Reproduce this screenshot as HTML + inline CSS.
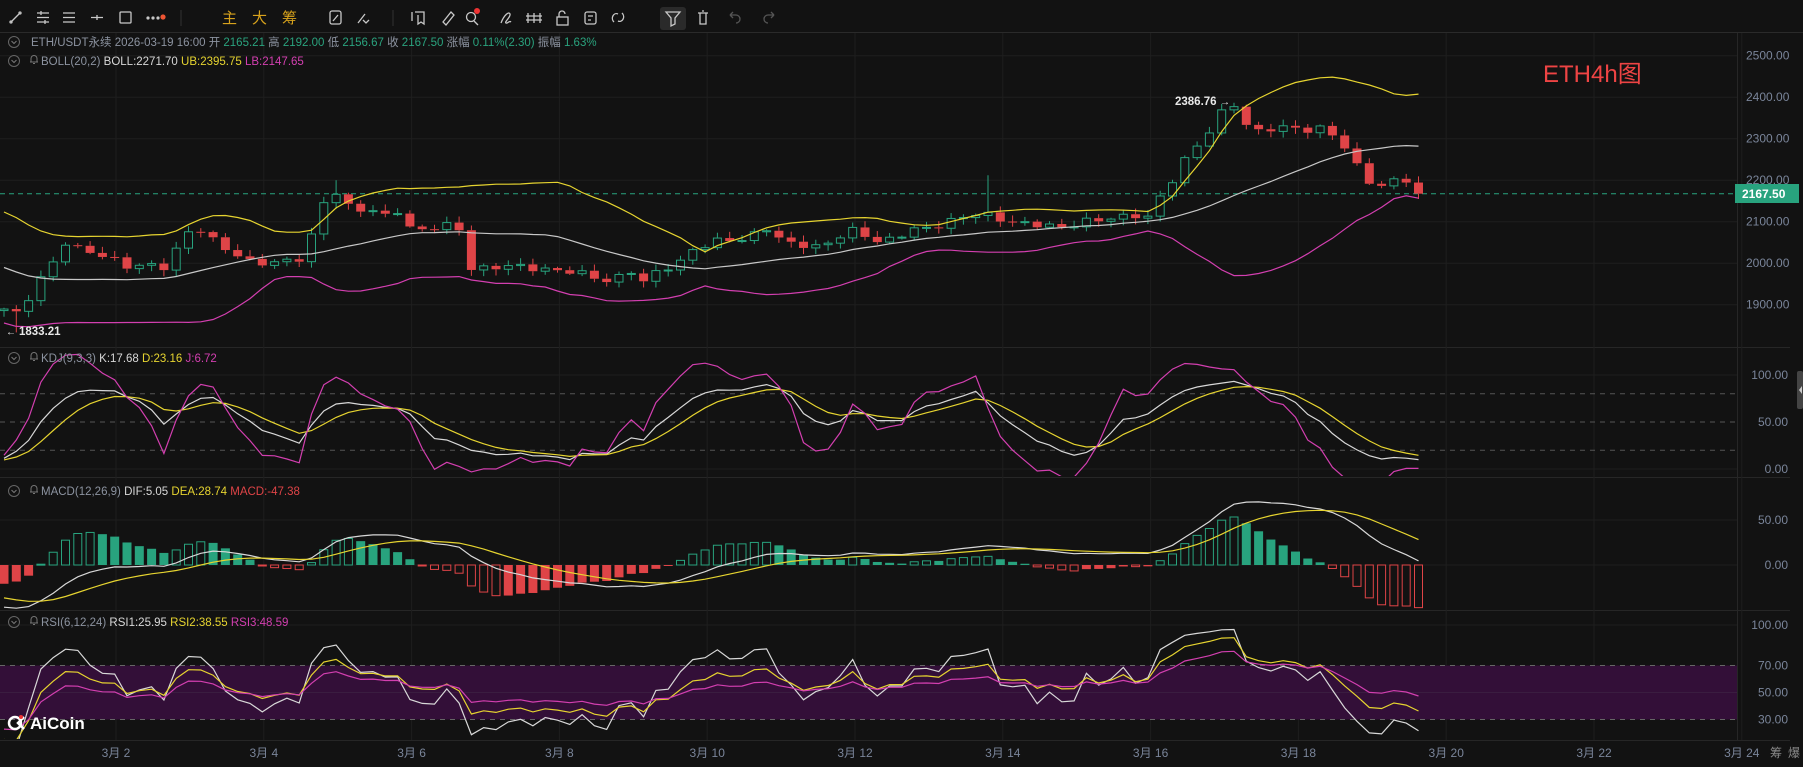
<!DOCTYPE html>
<html><head><meta charset="utf-8">
<style>
html,body{margin:0;padding:0;background:#121212;}
body{width:1803px;height:767px;overflow:hidden;position:relative;font-family:"Liberation Sans","Noto Sans CJK SC",sans-serif;}
svg{position:absolute;left:0;top:0;}
</style></head>
<body>
<svg id="c" width="1803" height="767" xmlns="http://www.w3.org/2000/svg"></svg>
<script>
const S=document.getElementById('c');
let out='';
const CR=1737;
const G='#28a37e', R='#df4447';
function line(x1,y1,x2,y2,c,w,d){out+=`<line x1="${x1}" y1="${y1}" x2="${x2}" y2="${y2}" stroke="${c}" stroke-width="${w||1}" ${d?'stroke-dasharray="'+d+'"':''}/>`;}
function txt(x,y,t,c,s,extra){out+=`<text x="${x}" y="${y}" fill="${c}" font-size="${s||12}" font-family="Liberation Sans, Noto Sans CJK SC, sans-serif" ${extra||''}>${t}</text>`;}
out+=`<rect width="1803" height="767" fill="#121212"/>`;
line(0,32.5,1803,32.5,'#2a2a2a',1);
const panes=[[33,347],[347,477],[477,610],[610,740]];
panes.forEach(p=>line(0,p[1]+.5,1790,p[1]+.5,'#262626',1));
line(CR+.5,33,CR+.5,740,'#262626',1);
const dates=['3月 2','3月 4','3月 6','3月 8','3月 10','3月 12','3月 14','3月 16','3月 18','3月 20','3月 22','3月 24'];
dates.forEach((d,i)=>{const x=116+i*147.8;line(x,33,x,740,'#1e1e1e',1);txt(x,757,d,'#7a859a',12,'text-anchor="middle"');});
txt(1770,757,'筹','#8a8a8a',12);txt(1788,757,'爆','#8a8a8a',12);
const py=p=>55.7+(2500-p)*0.415;
for(let p=1900;p<=2500;p+=100){const y=py(p);line(0,y,CR,y,'#1e1e1e',1);txt(1746,y+4,p.toFixed(2),'#7a859a',12);}
const ky=v=>469-v*0.94;
[100,0].forEach(v=>{line(0,ky(v),CR,ky(v),'#1e1e1e',1);});
[80,50,20].forEach(v=>line(0,ky(v),CR,ky(v),'#555',1,'5,5'));
[[100,'100.00'],[50,'50.00'],[0,'0.00']].forEach(a=>txt(1788,ky(a[0])+4,a[1],'#7a859a',12,'text-anchor="end"'));
const my=v=>565-v*0.9;
[50,0].forEach(v=>line(0,my(v),CR,my(v),'#1e1e1e',1));
txt(1788,my(50)+4,'50.00','#7a859a',12,'text-anchor="end"');txt(1788,my(0)+4,'0.00','#7a859a',12,'text-anchor="end"');
const ry=v=>625+(100-v)*1.35;
out+=`<rect x="0" y="${ry(70)}" width="${CR}" height="${ry(30)-ry(70)}" fill="#330f38"/>`;
line(0,ry(100),CR,ry(100),'#1e1e1e',1);line(0,ry(50),CR,ry(50),'#3a1d40',1);
[70,30].forEach(v=>line(0,ry(v),CR,ry(v),'#666',1,'5,5'));
[[100,'100.00'],[70,'70.00'],[50,'50.00'],[30,'30.00']].forEach(a=>txt(1788,ry(a[0])+4,a[1],'#7a859a',12,'text-anchor="end"'));

const K=[[0,1900],[10,1870],[20,1900],[35,1960],[45,1990],[55,2050],[65,2040],[80,2030],[95,2010],[110,1990],[130,2000],[145,1990],[160,2060],[170,2090],[185,2060],[200,2030],[215,2000],[230,2000],[250,2010],[265,2010],[280,2140],[295,2180],[305,2130],[320,2130],[335,2110],[345,2130],[355,2090],[370,2080],[385,2090],[400,2080],[410,1990],[430,1990],[450,1990],[470,1990],[490,1980],[510,1970],[530,1960],[550,1980],[560,1950],[575,1990],[590,2000],[600,2030],[615,2040],[630,2060],[650,2060],[665,2085],[680,2050],[695,2050],[710,2040],[725,2050],[740,2080],[755,2070],[765,2050],[780,2060],[795,2080],[810,2090],[825,2100],[840,2110],[855,2120],[870,2110],[880,2100],[895,2090],[910,2090],[925,2090],[940,2100],[955,2100],[970,2110],[985,2120],[1000,2110],[1010,2160],[1020,2200],[1030,2250],[1045,2300],[1055,2330],[1065,2370],[1075,2380],[1080,2340],[1095,2320],[1110,2330],[1125,2320],[1140,2320],[1150,2330],[1165,2300],[1180,2230],[1195,2180],[1210,2200],[1220,2210],[1235,2167.5]];
const Kr=K.map(a=>[(a[0]*1.15-4)/12.3,a[1]]);
function interp(i){for(let k=0;k<Kr.length-1;k++){if(i>=Kr[k][0]&&i<=Kr[k+1][0]){const t=(i-Kr[k][0])/(Kr[k+1][0]-Kr[k][0]);return Kr[k][1]+t*(Kr[k+1][1]-Kr[k][1]);}}return Kr[Kr.length-1][1];}
const N=116, W=45;
let C=[],O=[],H=[],L=[];
for(let j=0;j<W;j++){let c; if(j<25) c=2080+Math.sin(j*0.6)*30; else {const t=(j-25)/20; c=2110-230*t;} c+=Math.sin(j*1.7)*10; C.push(c);}
for(let i=0;i<N;i++){let c=interp(i)+Math.sin(i*2.3)*7+Math.sin(i*5.1)*4; if(i==N-1)c=2167.5; C.push(c);}
for(let j=0;j<C.length;j++){const o=j?C[j-1]:C[0];O.push(o);const w1=3+Math.abs(Math.sin(j*3.7))*12,w2=3+Math.abs(Math.sin(j*2.9))*12;H.push(Math.max(o,C[j])+w1);L.push(Math.min(o,C[j])-w2);}
const sp=(x,h)=>{const i=Math.round((x*1.15-4)/12.3)+W;H[i]=h;};
sp(290,2200);sp(858,2212);sp(1070,2386.76);
{const i=Math.round((10*1.15-4)/12.3)+W;L[i]=1833.21;}
const n=C.length;
let MB=[],UB=[],LB=[];
for(let j=0;j<n;j++){const a=C.slice(Math.max(0,j-19),j+1);const m=a.reduce((s,v)=>s+v,0)/a.length;const sd=Math.sqrt(a.reduce((s,v)=>s+(v-m)*(v-m),0)/a.length);MB.push(m);UB.push(m+2*sd);LB.push(m-2*sd);}
let Kk=[],Dd=[],Jj=[];let kp=50,dp=50;
for(let j=0;j<n;j++){const lo=Math.min(...L.slice(Math.max(0,j-8),j+1)),hi=Math.max(...H.slice(Math.max(0,j-8),j+1));const rsv=(C[j]-lo)/(hi-lo)*100;kp=2/3*kp+rsv/3;dp=2/3*dp+kp/3;Kk.push(kp);Dd.push(dp);Jj.push(3*kp-2*dp);}
let e12=C[0],e26=C[0],dea=0,DIF=[],DEA=[],HIST=[];
for(let j=0;j<n;j++){e12=e12*11/13+C[j]*2/13;e26=e26*25/27+C[j]*2/27;const d=e12-e26;dea=dea*8/10+d*2/10;DIF.push(d);DEA.push(dea);HIST.push(2*(d-dea));}
function rsi(p){let up=0,dn=0,r=[];for(let j=0;j<n;j++){const d=j?C[j]-C[j-1]:0;up=(up*(p-1)+Math.max(d,0))/p;dn=(dn*(p-1)+Math.max(-d,0))/p;r.push(dn+up?100*up/(up+dn):50);}return r;}
const R1=rsi(6),R2=rsi(12),R3=rsi(24);
const X=i=>4+i*12.3;
function poly(arr,f,c,clip){let pts=[];for(let i=0;i<N;i++)pts.push(X(i).toFixed(1)+','+f(arr[i+W]).toFixed(1));out+=`<polyline points="${pts.join(' ')}" fill="none" stroke="${c}" stroke-width="1.2" ${clip?'clip-path="url(#'+clip+')"':''}/>`;}
out+=`<defs><clipPath id="ck"><rect x="0" y="348" width="${CR}" height="128"/></clipPath><clipPath id="cm"><rect x="0" y="478" width="${CR}" height="131"/></clipPath><clipPath id="cr"><rect x="0" y="611" width="${CR}" height="128"/></clipPath></defs>`;
line(0,py(2167.5),CR,py(2167.5),G,1,'5,4');
for(let i=0;i<N;i++){const j=i+W,x=X(i),o=O[j],c=C[j],up=c>=o,col=up?G:R;const t=py(Math.max(o,c)),b=py(Math.min(o,c));
line(x,py(H[j]),x,t,col,1);line(x,b,x,py(L[j]),col,1);
const h=Math.max(b-t,1);
if(up)out+=`<rect x="${x-4}" y="${t}" width="8" height="${h}" fill="#121212" stroke="${col}" stroke-width="1"/>`;
else out+=`<rect x="${x-4.5}" y="${t}" width="9" height="${h}" fill="${col}"/>`;}
poly(MB,py,'#c8c8c8');poly(UB,py,'#e6d430');poly(LB,py,'#d33fb0');
poly(Kk,ky,'#d8d8d8','ck');poly(Dd,ky,'#e6d430','ck');poly(Jj,ky,'#d33fb0','ck');
for(let i=0;i<N;i++){const j=i+W,v=HIST[j],pv=HIST[j-1],x=X(i);const y0=my(0),y1=my(v);const top=Math.min(y0,y1),h=Math.max(Math.abs(y1-y0),1);
if(v>=0){if(v>=pv)out+=`<rect x="${x-4}" y="${top}" width="8" height="${h}" fill="none" stroke="${G}" stroke-width="1"/>`;else out+=`<rect x="${x-4.5}" y="${top}" width="9" height="${h}" fill="${G}"/>`;}
else{if(v<=pv)out+=`<rect x="${x-4}" y="${top}" width="8" height="${h}" fill="none" stroke="${R}" stroke-width="1"/>`;else out+=`<rect x="${x-4.5}" y="${top}" width="9" height="${h}" fill="${R}"/>`;}}
poly(DIF,my,'#d8d8d8','cm');poly(DEA,my,'#e6d430','cm');
poly(R1,ry,'#d8d8d8','cr');poly(R2,ry,'#e6d430','cr');poly(R3,ry,'#d33fb0','cr');
txt(1175,105,'2386.76','#e8e8e8',11.5,'font-weight="bold"');txt(1220,105,'→','#e8e8e8',10);
txt(6,335,'← ','#e8e8e8',10);txt(19,335,'1833.21','#e8e8e8',11.5,'font-weight="bold"');
out+=`<rect x="1735" y="184" width="64" height="19" fill="${G}"/>`;txt(1742,198,'2167.50','#fff',12,'font-weight="bold"');
txt(1543,82,'ETH4h图','#ee4444',24);
function circ(x,y){out+=`<circle cx="${x}" cy="${y}" r="5.5" fill="none" stroke="#666" stroke-width="1"/><path d="M${x-2.5} ${y-1}l2.5 2.5l2.5-2.5" fill="none" stroke="#777"/>`;}
function bell(x,y){out+=`<path d="M${x-4} ${y+3}h8M${x-3} ${y+3}v-3.5a3 3 0 0 1 6 0v3.5M${x-1} ${y+4.5}h2" fill="none" stroke="#777" stroke-width="1"/>`;}
function seq(x,y,parts){let s=`<text x="${x}" y="${y}" font-size="11.5" font-family="Liberation Sans, Noto Sans CJK SC, sans-serif">`;parts.forEach(p=>{s+=`<tspan fill="${p[1]}">${p[0]}</tspan>`});out+=s+'</text>';}
circ(14,42);
seq(31,46,[['ETH/USDT永续 2026-03-19 16:00 开 ','#8c93a0'],['2165.21','#2aa37e'],[' 高 ','#8c93a0'],['2192.00','#2aa37e'],[' 低 ','#8c93a0'],['2156.67','#2aa37e'],[' 收 ','#8c93a0'],['2167.50','#2aa37e'],[' 涨幅 ','#8c93a0'],['0.11%(2.30)','#2aa37e'],[' 振幅 ','#8c93a0'],['1.63%','#2aa37e']]);
circ(14,61);bell(34,59);seq(41,65,[['BOLL(20,2)  ','#8c93a0'],['BOLL:2271.70  ','#d8d8d8'],['UB:2395.75  ','#e6d430'],['LB:2147.65','#d33fb0']]);
circ(14,358);bell(34,356);seq(41,362,[['KDJ(9,3,3)  ','#8c93a0'],['K:17.68  ','#d8d8d8'],['D:23.16  ','#e6d430'],['J:6.72','#d33fb0']]);
circ(14,491);bell(34,489);seq(41,495,[['MACD(12,26,9)  ','#8c93a0'],['DIF:5.05  ','#d8d8d8'],['DEA:28.74  ','#e6d430'],['MACD:-47.38','#df4447']]);
circ(14,622);bell(34,620);seq(41,626,[['RSI(6,12,24)  ','#8c93a0'],['RSI1:25.95  ','#d8d8d8'],['RSI2:38.55  ','#e6d430'],['RSI3:48.59','#d33fb0']]);
out+=`<circle cx="15" cy="723" r="6" fill="none" stroke="#fff" stroke-width="2.5"/><path d="M24 717l-6 6l6 6" fill="none" stroke="#fff" stroke-width="2.5"/><circle cx="21" cy="717" r="2" fill="#e33"/>`;
txt(30,729,'AiCoin','#fff',17,'font-weight="bold"');
out+=`<rect x="1797" y="371" width="6" height="38" rx="2" fill="#444"/><path d="M1802 386l-3 4l3 4z" fill="#ccc"/>`;
const ic='#c8c8c8';
function ti(s){out+=`<g fill="none" stroke="${ic}" stroke-width="1.3">${s}</g>`;}
ti(`<path d="M11 22l9-9"/><circle cx="11" cy="22" r="1"/><circle cx="20" cy="13" r="1"/>`);
ti(`<path d="M37 13h12M37 17.5h12M37 22h12M41 11v4M45 20v4"/>`);
ti(`<path d="M63 13h12M63 17.5h12M63 22h12"/>`);
ti(`<path d="M91 17.5h12M97 15v5"/>`);
ti(`<rect x="120" y="12" width="11" height="11" rx="1"/>`);
out+=`<circle cx="148" cy="18" r="1.6" fill="${ic}"/><circle cx="153" cy="18" r="1.6" fill="${ic}"/><circle cx="158" cy="18" r="1.6" fill="${ic}"/><circle cx="163" cy="17" r="2.6" fill="#e53"/>`;
line(181,10,181,26,'#333',1);
txt(222,23,'主','#d7a21c',15);txt(252,23,'大','#d7a21c',15);txt(282,23,'筹','#d7a21c',15);
ti(`<rect x="330" y="11" width="11" height="13" rx="2"/><path d="M333 21l5-6"/>`);
ti(`<path d="M358 23l7-9M363 20l3 3l3-3"/>`);
line(393,10,393,26,'#333',1);
ti(`<path d="M415 12h9v12l-3-2l-3 2v-9M412 12v9"/>`);
ti(`<path d="M443 22l8-10l3 3l-8 10z"/>`);
ti(`<circle cx="471" cy="17" r="4.5"/><path d="M474 21l4 4"/>`);out+=`<circle cx="477" cy="11" r="3" fill="#e33"/>`;
ti(`<path d="M501 23c3-8 8-12 9-9s-6 8-4 9s3-3 5-1"/>`);
ti(`<path d="M528 13v10M534 13v10M540 13v10M526 16h16M526 20h16"/>`);
ti(`<rect x="557" y="17" width="11" height="8"/><path d="M559 17v-3a3 3 0 0 1 6 0"/>`);
ti(`<rect x="585" y="12" width="11" height="12" rx="2"/><path d="M588 16h5M588 20h3"/>`);
ti(`<path d="M614 22c-4-4 0-10 4-8M622 13c4 4 0 10-4 8"/>`);
out+=`<rect x="660" y="7" width="26" height="23" rx="3" fill="#2a2a2a"/>`;
ti(`<path d="M666 12h14l-5 6v6l-4 2v-8z"/>`);
ti(`<path d="M698 13h10M700 13v11h6v-11M702 11h2"/>`);
out+=`<path d="M730 15h6a4 4 0 0 1 0 8M730 15l3-3M730 15l3 3" fill="none" stroke="#555" stroke-width="1.3"/><path d="M774 15h-6a4 4 0 0 0 0 8M774 15l-3-3M774 15l-3 3" fill="none" stroke="#555" stroke-width="1.3"/>`;
S.innerHTML=out;
</script>
</body></html>
